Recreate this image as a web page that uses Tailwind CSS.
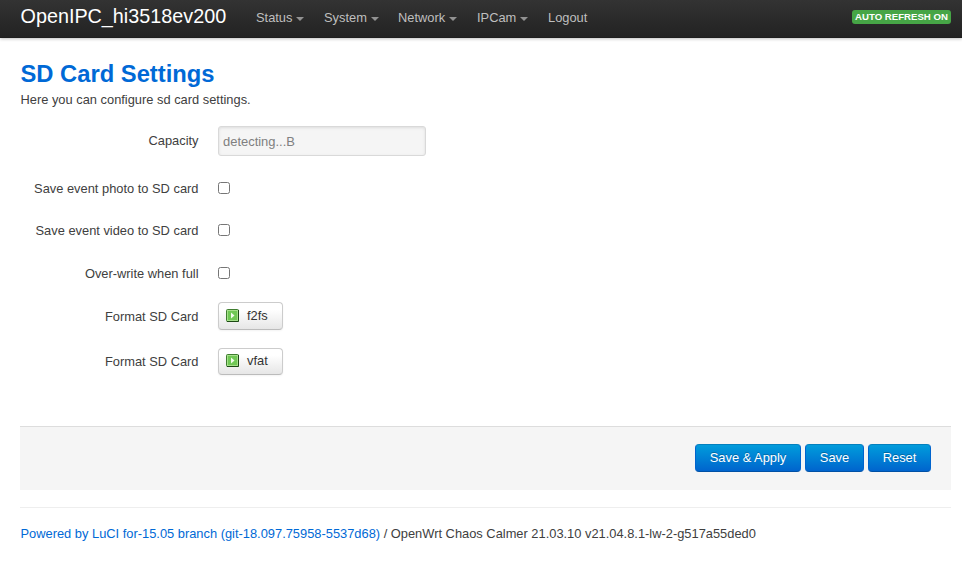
<!DOCTYPE html>
<html lang="en">
<head>
<meta charset="utf-8">
<title>OpenIPC_hi3518ev200 - SD Card Settings</title>
<script src="https://cdn.jsdelivr.net/npm/@tailwindcss/browser@4"></script>
</head>
<body class="bg-white font-['Liberation_Sans',Arial,sans-serif] text-[12.86px] leading-[18px] text-[#404040] overflow-hidden">
<header class="flex h-[38px] items-start bg-linear-to-b from-[#333] to-[#222] pl-[20.5px] pr-[11px] shadow-[0_1px_3px_rgba(0,0,0,.25),inset_0_-1px_0_rgba(0,0,0,.1)]">
  <a class="mt-[5px] w-[224.5px] text-[19.8px] leading-[22px] text-white">OpenIPC_hi3518ev200</a>
  <nav class="flex pl-[11px] pt-[9px] text-[#bfbfbf]">
    <a class="flex w-[68px]">Status<i class="ml-1 mt-2 h-0 border-x-4 border-t-4 border-x-transparent border-t-[#929292]"></i></a>
    <a class="flex w-[74px]">System<i class="ml-1 mt-2 h-0 border-x-4 border-t-4 border-x-transparent border-t-[#929292]"></i></a>
    <a class="flex w-[79px]">Network<i class="ml-1 mt-2 h-0 border-x-4 border-t-4 border-x-transparent border-t-[#929292]"></i></a>
    <a class="flex w-[71px]">IPCam<i class="ml-1 mt-2 h-0 border-x-4 border-t-4 border-x-transparent border-t-[#929292]"></i></a>
    <a>Logout</a>
  </nav>
  <span class="ml-auto mt-[10px] h-[14px] w-[99px] whitespace-nowrap rounded-[3px] bg-[#46a546] text-center text-[9.63px] font-bold leading-[14px] text-white">AUTO REFRESH ON</span>
</header>
<main class="pl-[20px] pr-[11px] pt-[19px]">
  <h2 class="pl-[0.5px] text-[23.75px] font-bold leading-[34px] text-[#0069d6]">SD Card Settings</h2>
  <p class="pl-[0.5px]">Here you can configure sd card settings.</p>
  <form class="pt-[17px]">
    <div class="flex h-[41px] items-start">
      <label class="w-[178.5px] pt-[6px] text-right">Capacity</label>
      <input disabled value="detecting...B" class="ml-[19.5px] h-[30px] w-[208px] rounded-[3px] border border-[#d9d9d9] bg-[#f5f5f5] px-1 text-[12.95px] text-[#808080] shadow-[inset_0_1px_3px_rgba(0,0,0,.1)]">
    </div>
    <div class="flex h-[42px] items-center"><label class="w-[178.5px] pt-[2px] text-right">Save event photo to SD card</label><input type="checkbox" class="ml-[19.5px] h-[12px] w-[12px]"></div>
    <div class="flex h-[42px] items-center"><label class="w-[178.5px] pt-[2px] text-right">Save event video to SD card</label><input type="checkbox" class="ml-[19.5px] h-[12px] w-[12px]"></div>
    <div class="flex h-[44px] items-center"><label class="w-[178.5px] pt-[2px] text-right">Over-write when full</label><input type="checkbox" class="ml-[19.5px] h-[12px] w-[12px]"></div>
    <div class="flex h-[46px] items-start pt-[7px]">
      <label class="w-[178.5px] pt-[6px] text-right">Format SD Card</label>
      <button type="button" class="ml-[19.5px] flex h-[28px] w-[65px] items-start rounded-[4px] border border-[#ccc] border-b-[#bbb] bg-linear-to-b from-white from-25% to-[#e6e6e6] pl-[7px] pt-[4px] text-[#333] shadow-[inset_0_1px_0_rgba(255,255,255,.2),0_1px_2px_rgba(0,0,0,.05)]">
        <svg class="mr-[8px] mt-[2px]" width="13" height="13" viewBox="0 0 13 13"><rect x=".5" y=".5" width="12" height="12" rx="1" fill="#a5e08a" stroke="#3f7d30"/><path d="M12.5 1v11.5H1" fill="none" stroke="#1c4a14"/><rect x="2" y="2" width="9" height="9" fill="#70c855"/><path d="M5 3.5v6l3.5-3z" fill="#f2fced"/></svg>f2fs
      </button>
    </div>
    <div class="flex h-[85px] items-start pt-[7px]">
      <label class="w-[178.5px] pt-[5px] text-right">Format SD Card</label>
      <button type="button" class="ml-[19.5px] flex h-[27px] w-[65px] items-start rounded-[4px] border border-[#ccc] border-b-[#bbb] bg-linear-to-b from-white from-25% to-[#e6e6e6] pl-[7px] pt-[3px] text-[#333] shadow-[inset_0_1px_0_rgba(255,255,255,.2),0_1px_2px_rgba(0,0,0,.05)]">
        <svg class="mr-[8px] mt-[2px]" width="13" height="13" viewBox="0 0 13 13"><rect x=".5" y=".5" width="12" height="12" rx="1" fill="#a5e08a" stroke="#3f7d30"/><path d="M12.5 1v11.5H1" fill="none" stroke="#1c4a14"/><rect x="2" y="2" width="9" height="9" fill="#70c855"/><path d="M5 3.5v6l3.5-3z" fill="#f2fced"/></svg>vfat
      </button>
    </div>
    <div class="flex h-[64px] justify-end gap-[4px] border-t border-[#ddd] bg-[#f5f5f5] pr-[20px] pt-[17px] text-white">
      <button type="button" class="h-[28px] w-[106px] rounded-[4px] border border-[#0064cd] border-t-[#0480be] border-b-[#0050a5] bg-linear-to-b from-[#049cdb] to-[#0064cd] pb-px [text-shadow:0_-1px_0_rgba(0,0,0,.25)]">Save &amp; Apply</button>
      <button type="button" class="h-[28px] w-[59px] rounded-[4px] border border-[#0064cd] border-t-[#0480be] border-b-[#0050a5] bg-linear-to-b from-[#049cdb] to-[#0064cd] pb-px [text-shadow:0_-1px_0_rgba(0,0,0,.25)]">Save</button>
      <button type="button" class="h-[28px] w-[63px] rounded-[4px] border border-[#0064cd] border-t-[#0480be] border-b-[#0050a5] bg-linear-to-b from-[#049cdb] to-[#0064cd] pb-px [text-shadow:0_-1px_0_rgba(0,0,0,.25)]">Reset</button>
    </div>
  </form>
  <footer class="mt-[17px] border-t border-[#eee] pl-[0.5px] pt-[17px]"><a class="text-[#0069d6]">Powered by LuCI for-15.05 branch (git-18.097.75958-5537d68)</a> / OpenWrt Chaos Calmer 21.03.10 v21.04.8.1-lw-2-g517a55ded0</footer>
</main>
</body>
</html>
